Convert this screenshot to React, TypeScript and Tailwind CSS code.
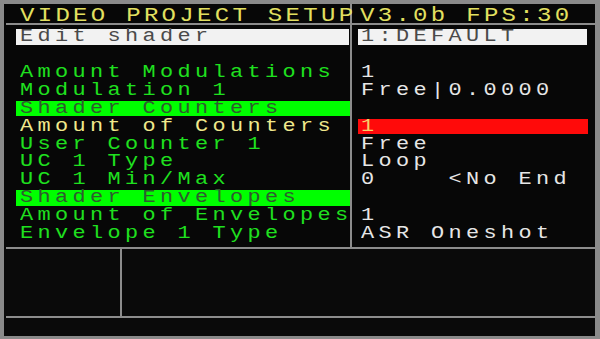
import type { ReactNode } from 'react'

const mono = "font-['Liberation_Mono','DejaVu_Sans_Mono',monospace]"

// wide terminal glyphs: stretch the mono face horizontally
const Glyphs = ({ children, className = '' }: { children: ReactNode; className?: string }) => (
  <span
    className={`inline-block origin-left scale-x-[1.25] whitespace-pre tracking-[3.5px] ${className}`}
  >
    {children}
  </span>
)

type Row = {
  label: string
  value?: string
  kind?: 'edit' | 'section' | 'active'
}

const rows: Row[] = [
  { label: 'Edit shader', value: '1:DEFAULT', kind: 'edit' },
  { label: '' },
  { label: 'Amount Modulations', value: '1' },
  { label: 'Modulation 1', value: 'Free|0.0000' },
  { label: 'Shader Counters', kind: 'section' },
  { label: 'Amount of Counters', value: '1', kind: 'active' },
  { label: 'User Counter 1', value: 'Free' },
  { label: 'UC 1 Type', value: 'Loop' },
  { label: 'UC 1 Min/Max', value: '0    <No End' },
  { label: 'Shader Envelopes', kind: 'section' },
  { label: 'Amount of Envelopes', value: '1' },
  { label: 'Envelope 1 Type', value: 'ASR Oneshot' },
]

const LabelRow = ({ row }: { row: Row }) => {
  const barClass =
    row.kind === 'edit'
      ? 'bg-[#f2f2f2] text-[#4a4a4a] mr-[1px]'
      : row.kind === 'section'
        ? 'bg-[#00ff00] text-[#2f5a2f]'
        : row.kind === 'active'
          ? 'text-[#f0e88c]'
          : 'text-[#1fe01f]'

  return (
    <div className="h-[17.9px] py-[1.2px] pl-[12px]">
      <div className={`h-full pl-[4px] text-[17.5px] leading-[15.5px] ${barClass}`}>
        <Glyphs>{row.label}</Glyphs>
      </div>
    </div>
  )
}

const ValueRow = ({ row }: { row: Row }) => {
  const barClass =
    row.kind === 'edit'
      ? 'bg-[#f2f2f2] text-[#4a4a4a]'
      : row.kind === 'active'
        ? 'bg-[#ff0a0a] text-[#f5d36a] mr-[-1px]'
        : 'text-[#e6e6e6]'

  return (
    <div className="h-[17.9px] py-[1.2px] pr-[8px] pl-[6px]">
      <div className={`h-full pl-[3px] text-[17.5px] leading-[15.5px] ${barClass}`}>
        <Glyphs>{row.value ?? ''}</Glyphs>
      </div>
    </div>
  )
}

const HeaderText = ({ children }: { children: ReactNode }) => (
  <div className="h-[19px] pt-[2px] text-[20px] leading-[19px] text-[#e2e060]">
    <span className="inline-block origin-left scale-x-[1.2] whitespace-pre tracking-[2.75px]">
      {children}
    </span>
  </div>
)

export default function App() {
  return (
    <div
      className={`h-[339px] w-[600px] overflow-hidden bg-[#8a8a8a] pt-[4px] pr-[5px] pb-[3px] pl-[4px] ${mono}`}
    >
      <div className="flex h-full flex-col bg-[#070707]">
        {/* setup panel */}
        <div className="flex h-[243px]">
          <div className="w-[346px]">
            <div className="pl-[16px]">
              <HeaderText>VIDEO PROJECT SETUP</HeaderText>
            </div>
            <div className="ml-[2px] h-[1.5px] bg-[#8c8c8c]" />
            <div className="pt-[3.5px]">
              {rows.map((row, i) => (
                <LabelRow key={i} row={row} />
              ))}
            </div>
          </div>
          <div className="w-[1.5px] bg-[#8c8c8c]" />
          <div className="flex-1">
            <div className="pl-[8px]">
              <HeaderText>V3.0b FPS:30</HeaderText>
            </div>
            <div className="h-[1.5px] bg-[#8c8c8c]" />
            <div className="pt-[3.5px]">
              {rows.map((row, i) => (
                <ValueRow key={i} row={row} />
              ))}
            </div>
          </div>
        </div>

        <div className="ml-[2px] h-[1.5px] bg-[#8c8c8c]" />

        {/* preview area */}
        <div className="flex h-[67.5px] bg-[#0a0a0a]">
          <div className="w-[116px]" />
          <div className="w-[1.5px] bg-[#8c8c8c]" />
          <div className="flex-1" />
        </div>

        <div className="ml-[2px] h-[1.5px] bg-[#8c8c8c]" />

        <div className="flex-1 bg-[#0a0a0a]" />
      </div>
    </div>
  )
}
